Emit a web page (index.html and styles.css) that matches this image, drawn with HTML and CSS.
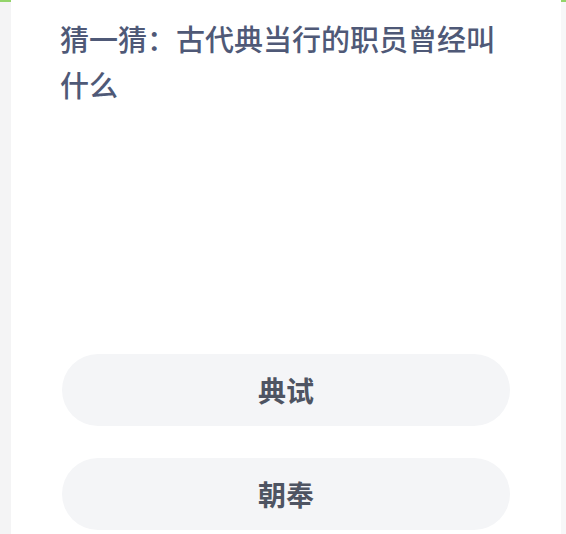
FILE: index.html
```html
<!DOCTYPE html>
<html lang="zh">
<head>
<meta charset="utf-8">
<link rel="stylesheet" href="styles.css">
</head>
<body>
<div class="page">
  <div class="side side-left"></div>
  <main class="card">
    <h1 class="question">猜一猜：古代典当行的职员曾经叫什么</h1>
    <div class="options">
      <div class="option">典试</div>
      <div class="option">朝奉</div>
    </div>
  </main>
  <div class="side side-right"></div>
</div>
</body>
</html>
```
FILE: styles.css
```css
html, body {
  margin: 0;
  padding: 0;
  background: #ffffff;
}
.page {
  display: flex;
  width: 566px;
  height: 534px;
  overflow: hidden;
  font-family: "Noto Sans CJK SC", "Noto Sans", sans-serif;
}
.side {
  background: #f4f4f5;
  border-top: 2px solid #93d46a;
}
.side-left {
  width: 11px;
}
.side-right {
  width: 5px;
  background: #f7f7f8;
}
.card {
  flex: 1;
  background: #ffffff;
  padding: 15px 0 0 49px;
  box-sizing: border-box;
}
.question {
  margin: 0;
  width: 450px;
  font-size: 29px;
  line-height: 46px;
  font-weight: 500;
  color: #4f5977;
}
.options {
  margin-top: 247px;
  margin-left: 2px;
  width: 448px;
  display: flex;
  flex-direction: column;
  gap: 32px;
}
.option {
  height: 72px;
  border-radius: 36px;
  background: #f4f5f7;
  display: flex;
  align-items: center;
  justify-content: center;
  font-size: 28px;
  font-weight: 700;
  color: #4e5462;
}
```
